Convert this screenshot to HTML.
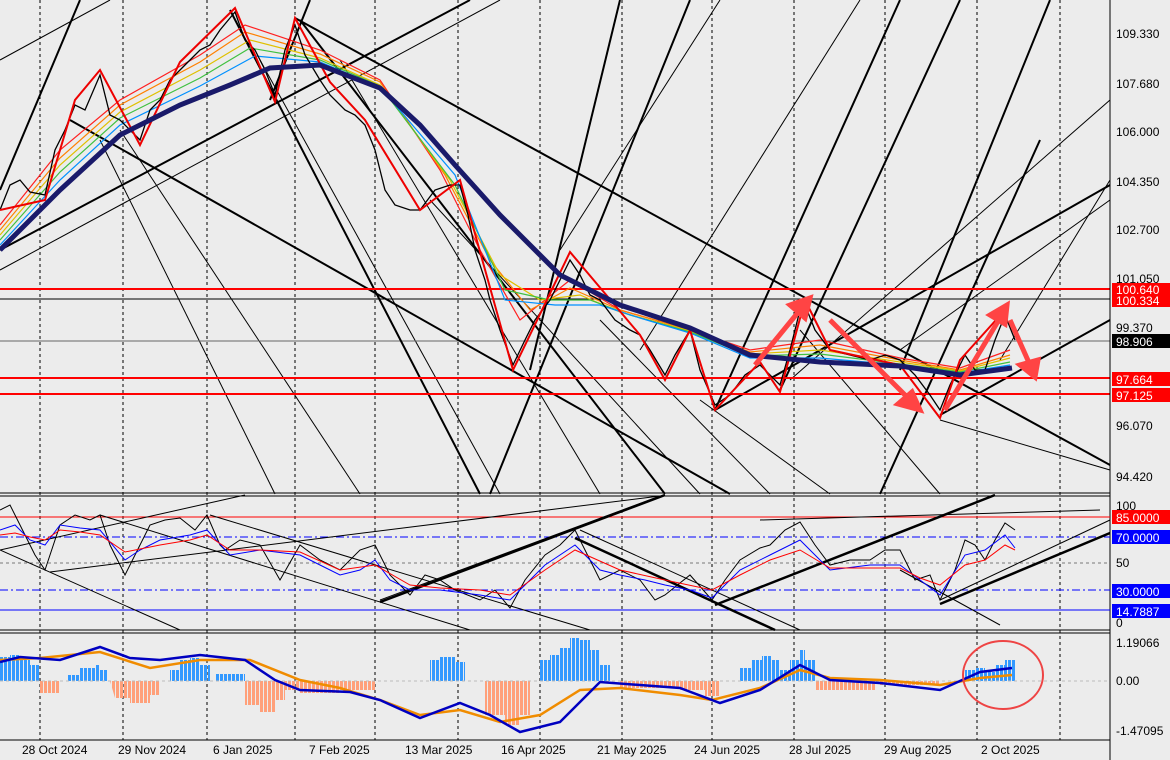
<!DOCTYPE html>
<html><head><meta charset="utf-8"><style>
html,body{margin:0;padding:0;background:#ececec;}
svg{display:block;font-family:"Liberation Sans",sans-serif;}
</style></head><body>
<svg width="1170" height="760" viewBox="0 0 1170 760" xmlns="http://www.w3.org/2000/svg">
<defs>
<pattern id="pb" width="4" height="10" patternUnits="userSpaceOnUse"><rect width="3" height="10" fill="#3399ff"/></pattern>
<pattern id="pr" width="4" height="10" patternUnits="userSpaceOnUse"><rect width="3" height="10" fill="#ffa07a"/></pattern>
</defs>
<rect width="1170" height="760" fill="#ececec"/>
<g stroke="#000" stroke-width="1" stroke-dasharray="3,3">
<line x1="40" y1="0" x2="40" y2="740"/><line x1="123" y1="0" x2="123" y2="740"/><line x1="207" y1="0" x2="207" y2="740"/><line x1="295" y1="0" x2="295" y2="740"/><line x1="375" y1="0" x2="375" y2="740"/><line x1="458" y1="0" x2="458" y2="740"/><line x1="540" y1="0" x2="540" y2="740"/><line x1="622" y1="0" x2="622" y2="740"/><line x1="712" y1="0" x2="712" y2="740"/><line x1="794" y1="0" x2="794" y2="740"/><line x1="885" y1="0" x2="885" y2="740"/><line x1="977" y1="0" x2="977" y2="740"/><line x1="1060" y1="0" x2="1060" y2="740"/>
</g>
<g stroke="#000" stroke-width="1" fill="none">
<line x1="0" y1="60" x2="110" y2="0"/><line x1="0" y1="270" x2="500" y2="0"/><line x1="100" y1="140" x2="275" y2="494"/><line x1="120" y1="130" x2="360" y2="494"/><line x1="260" y1="60" x2="500" y2="494"/><line x1="340" y1="60" x2="600" y2="494"/><line x1="430" y1="200" x2="700" y2="494"/><line x1="600" y1="320" x2="770" y2="494"/><line x1="700" y1="400" x2="830" y2="494"/><line x1="800" y1="330" x2="940" y2="494"/>
<line x1="560" y1="250" x2="720" y2="0"/><line x1="640" y1="350" x2="860" y2="0"/><line x1="790" y1="380" x2="1110" y2="100"/><line x1="900" y1="350" x2="1110" y2="200"/><line x1="940" y1="420" x2="1110" y2="470"/><line x1="1000" y1="360" x2="1110" y2="180"/>
<line x1="0" y1="341" x2="1110" y2="341" stroke="#666"/><line x1="0" y1="299" x2="1110" y2="299"/>
</g>
<g stroke="#000" stroke-width="2" fill="none">
<line x1="0" y1="250" x2="470" y2="0"/><line x1="70" y1="120" x2="730" y2="494"/><line x1="295" y1="18" x2="1110" y2="465"/><line x1="230" y1="10" x2="480" y2="494"/><line x1="300" y1="20" x2="665" y2="494"/><line x1="270" y1="100" x2="310" y2="0"/><line x1="0" y1="190" x2="80" y2="0"/><line x1="490" y1="494" x2="690" y2="0"/><line x1="530" y1="370" x2="620" y2="0"/><line x1="715" y1="410" x2="900" y2="0"/><line x1="780" y1="390" x2="960" y2="0"/><line x1="900" y1="370" x2="1050" y2="0"/><line x1="715" y1="410" x2="1110" y2="185"/><line x1="940" y1="415" x2="1110" y2="320"/><line x1="880" y1="494" x2="1040" y2="140"/>
</g>
<g stroke="#f00" stroke-width="2"><line x1="0" y1="289" x2="1110" y2="289"/><line x1="0" y1="378" x2="1110" y2="378"/><line x1="0" y1="394" x2="1110" y2="394"/></g>
<!-- ribbon fan -->
<g fill="none" stroke-width="1.2">
<polyline stroke="#ff2020" points="0,225 60,150 120,100 200,55 245,25 320,50 380,80 440,170 480,250 520,320 570,280 620,310 690,330 750,350 820,340 900,358 960,368 1010,350"/>
<polyline stroke="#ff8000" points="0,230 60,158 120,105 200,62 245,32 320,54 380,82 445,175 490,260 530,310 570,288 620,310 690,330 750,352 820,345 900,360 960,370 1010,355"/>
<polyline stroke="#e0c000" points="0,235 60,165 120,112 200,70 250,40 320,58 380,85 450,180 500,275 540,300 580,295 620,312 690,331 750,354 820,350 900,362 960,371 1010,358"/>
<polyline stroke="#40c040" points="0,240 60,172 120,118 200,78 250,48 320,60 380,86 455,185 505,290 550,300 590,300 630,315 690,332 750,356 820,354 900,364 960,372 1010,362"/>
<polyline stroke="#0090ff" points="0,245 60,180 120,125 200,86 255,56 320,62 380,87 455,175 505,300 555,305 600,305 640,318 690,333 750,358 820,358 900,365 960,373 1010,365"/>
</g>
<!-- price -->
<polyline fill="none" stroke="#000" stroke-width="1.3" points="0,210 10,185 20,180 30,192 45,195 55,150 65,130 75,105 85,110 100,75 110,115 120,120 130,130 140,140 150,110 160,100 170,80 180,70 190,60 200,50 210,45 220,30 235,12 245,40 255,50 265,70 275,95 285,50 295,25 305,55 320,80 330,95 345,110 355,115 365,125 375,150 385,190 395,205 410,210 420,210 435,190 450,185 460,185 468,215 475,250 485,280 490,300 500,330 513,365 525,340 535,320 550,300 560,280 570,260 580,275 590,295 600,300 615,320 630,330 640,335 650,350 665,375 675,355 690,330 700,370 715,405 730,395 745,375 760,365 770,375 780,385 790,350 800,310 805,305 815,330 830,350 850,355 870,360 885,355 900,360 915,375 930,395 940,410 950,385 965,355 975,370 985,370 995,340 1005,315 1015,340"/>
<polyline fill="none" stroke="#e00" stroke-width="2" points="0,210 45,200 75,100 100,70 140,145 180,62 235,8 275,102 295,18 330,82 365,120 420,210 460,180 513,370 570,252 640,335 665,380 690,330 715,410 760,362 780,392 805,300 830,350 900,365 940,418 960,360 1005,310"/>
<polyline fill="none" stroke="#1a1a6a" stroke-width="5" points="0,250 60,190 120,135 180,105 230,85 270,68 320,65 380,88 420,125 455,165 500,215 560,275 620,305 690,328 750,355 820,362 900,366 960,375 1012,368"/>
<g stroke="#f44" stroke-width="5" fill="#f44">
<line x1="755" y1="365" x2="800" y2="310"/><polygon points="810,298 790,305 805,318"/>
<line x1="830" y1="320" x2="910" y2="400"/><polygon points="920,410 898,404 912,392"/>
<line x1="945" y1="410" x2="1000" y2="318"/><polygon points="1007,305 990,315 1005,324"/>
<line x1="1010" y1="320" x2="1030" y2="365"/><polygon points="1035,377 1020,365 1038,360"/>
</g>
<g stroke="#000" stroke-width="1"><line x1="0" y1="493" x2="1110" y2="493"/><line x1="0" y1="496" x2="1110" y2="496"/><line x1="0" y1="630" x2="1110" y2="630"/><line x1="0" y1="633" x2="1110" y2="633"/><line x1="0" y1="740" x2="1110" y2="740"/><line x1="1110" y1="0" x2="1110" y2="760"/></g>
<line x1="0" y1="517" x2="1110" y2="517" stroke="#f00"/>
<line x1="0" y1="537" x2="1110" y2="537" stroke="#00f" stroke-dasharray="8,3,2,3"/>
<line x1="0" y1="563" x2="1110" y2="563" stroke="#777" stroke-dasharray="3,3"/>
<line x1="0" y1="590" x2="1110" y2="590" stroke="#00f" stroke-dasharray="8,3,2,3"/>
<line x1="0" y1="610" x2="1110" y2="610" stroke="#00f"/>
<g stroke="#000" fill="none" stroke-width="1">
<line x1="0" y1="550" x2="245" y2="495"/><line x1="50" y1="572" x2="660" y2="496"/><line x1="0" y1="550" x2="180" y2="630"/><line x1="100" y1="515" x2="470" y2="630"/><line x1="210" y1="515" x2="590" y2="630"/><line x1="380" y1="600" x2="660" y2="496"/><line x1="580" y1="530" x2="800" y2="630"/><line x1="760" y1="520" x2="1100" y2="510"/><line x1="940" y1="600" x2="1110" y2="520"/><line x1="900" y1="570" x2="1000" y2="625"/>
</g>
<g stroke="#000" stroke-width="2.5"><line x1="380" y1="602" x2="665" y2="495"/><line x1="575" y1="538" x2="775" y2="630"/><line x1="715" y1="605" x2="995" y2="495"/><line x1="940" y1="604" x2="1110" y2="533"/></g>
<polyline fill="none" stroke="#000" points="0,510 10,505 20,525 35,555 45,570 60,525 75,515 90,520 100,515 110,545 125,575 135,555 150,525 165,520 180,518 195,530 207,515 220,545 225,550 240,540 260,545 280,580 300,545 320,560 340,570 360,550 375,545 390,575 410,595 425,575 440,580 455,590 480,600 495,590 510,608 525,580 545,555 560,545 575,530 590,560 600,580 620,570 640,580 655,600 665,595 690,575 712,600 725,580 740,560 760,548 770,545 785,530 800,522 815,545 830,565 850,560 870,560 885,550 900,550 915,580 930,575 940,600 955,570 965,540 975,545 985,560 995,540 1005,523 1015,530"/>
<polyline fill="none" stroke="#00f" points="0,530 15,525 30,540 45,545 60,525 80,528 100,530 125,560 140,550 160,540 190,535 207,530 230,555 260,550 300,555 320,565 340,575 360,570 375,560 390,580 410,590 440,590 480,595 510,600 530,580 545,565 575,545 600,570 620,575 645,580 665,585 690,590 712,598 740,570 770,555 800,540 815,555 830,570 870,565 900,565 920,580 940,595 965,555 985,550 1005,535 1015,548"/>
<polyline fill="none" stroke="#f00" points="0,535 15,533 30,537 45,540 60,530 80,532 100,535 125,552 160,545 190,540 207,535 230,550 260,550 300,552 340,570 375,565 410,585 440,588 480,590 510,595 545,570 575,550 620,570 665,580 712,590 740,575 770,560 800,550 830,568 870,568 900,568 920,578 940,585 965,565 985,560 1005,545 1015,550"/>
<!-- MACD histogram -->
<path fill="url(#pb)" d="M0,681 V657 H10 V655 H20 V660 H30 V665 H40 V681 Z M68,681 V675 H80 V668 H95 V665 H100 V670 H108 V681 Z M170,681 V670 H180 V660 H190 V658 H200 V665 H210 V681 Z M215,681 V674 H245 V681 Z M430,681 V660 H440 V657 H455 V662 H465 V681 Z M540,681 V660 H550 V655 H560 V648 H570 V638 H580 V640 H590 V650 H600 V665 H610 V681 Z M740,681 V668 H752 V660 H762 V656 H772 V660 H780 V670 H790 V681 Z M790,681 V660 H800 V650 H805 V660 H815 V681 Z M965,681 V670 H975 V668 H985 V672 H995 V665 H1005 V660 H1015 V681 Z"/>
<path fill="url(#pr)" d="M40,681 H60 V693 H40 Z M110,681 H160 V695 H150 V703 H130 V698 H115 Z M245,681 H285 V700 H275 V712 H260 V705 H245 Z M285,681 H375 V690 H340 V693 H300 V690 H285 Z M485,681 H530 V715 H520 V725 H505 V715 H485 Z M620,681 H680 V688 H620 Z M680,681 H720 V696 H705 V690 H680 Z M815,681 H875 V690 H815 Z M880,681 H940 V685 H880 Z"/>
<line x1="0" y1="681" x2="1110" y2="681" stroke="#bbb" stroke-dasharray="3,3"/>
<polyline fill="none" stroke="#f08c00" stroke-width="2.5" points="0,660 40,658 100,652 150,668 200,660 250,660 300,680 340,688 380,700 420,715 460,710 500,722 540,715 580,690 620,688 680,695 712,700 760,688 800,670 830,678 880,680 940,685 980,678 1012,675"/>
<polyline fill="none" stroke="#0000c0" stroke-width="2.5" points="0,662 20,657 60,660 100,647 130,658 160,660 200,655 245,660 275,680 300,690 350,692 380,700 420,718 460,703 490,715 520,732 560,722 600,682 680,688 720,703 760,690 800,665 830,680 880,683 940,690 980,672 1012,668"/>
<ellipse cx="1003" cy="675" rx="40" ry="34" fill="none" stroke="#e44" stroke-width="2"/>
<g font-size="12" fill="#000">
<text x="1116" y="38">109.330</text><text x="1116" y="88">107.680</text><text x="1116" y="136">106.000</text><text x="1116" y="186">104.350</text><text x="1116" y="234">102.700</text><text x="1116" y="283">101.050</text><text x="1116" y="332">99.370</text><text x="1116" y="430">96.070</text><text x="1116" y="481">94.420</text>
<text x="1116" y="510">100</text><text x="1116" y="567">50</text><text x="1116" y="627">0</text>
<text x="1116" y="647">1.19066</text><text x="1116" y="685">0.00</text><text x="1116" y="735">-1.47095</text>
</g>
<g font-size="12">
<rect x="1112" y="283" width="58" height="13" fill="#f00"/><text x="1116" y="294" fill="#fff">100.640</text>
<rect x="1112" y="295" width="58" height="12" fill="#f00"/><text x="1116" y="305" fill="#fff">100.334</text>
<rect x="1112" y="334" width="58" height="14" fill="#000"/><text x="1116" y="346" fill="#fff">98.906</text>
<rect x="1112" y="372" width="58" height="14" fill="#f00"/><text x="1116" y="384" fill="#fff">97.664</text>
<rect x="1112" y="388" width="58" height="14" fill="#f00"/><text x="1116" y="400" fill="#fff">97.125</text>
<rect x="1112" y="510" width="58" height="14" fill="#f00"/><text x="1116" y="522" fill="#fff">85.0000</text>
<rect x="1112" y="530" width="58" height="14" fill="#00f"/><text x="1116" y="542" fill="#fff">70.0000</text>
<rect x="1112" y="584" width="58" height="14" fill="#00f"/><text x="1116" y="596" fill="#fff">30.0000</text>
<rect x="1112" y="604" width="58" height="14" fill="#00f"/><text x="1116" y="616" fill="#fff">14.7887</text>
</g>
<g font-size="12" fill="#000">
<text x="22" y="754">28 Oct 2024</text><text x="118" y="754">29 Nov 2024</text><text x="213" y="754">6 Jan 2025</text><text x="309" y="754">7 Feb 2025</text><text x="405" y="754">13 Mar 2025</text><text x="501" y="754">16 Apr 2025</text><text x="597" y="754">21 May 2025</text><text x="694" y="754">24 Jun 2025</text><text x="789" y="754">28 Jul 2025</text><text x="884" y="754">29 Aug 2025</text><text x="981" y="754">2 Oct 2025</text>
</g>
</svg>
</body></html>
